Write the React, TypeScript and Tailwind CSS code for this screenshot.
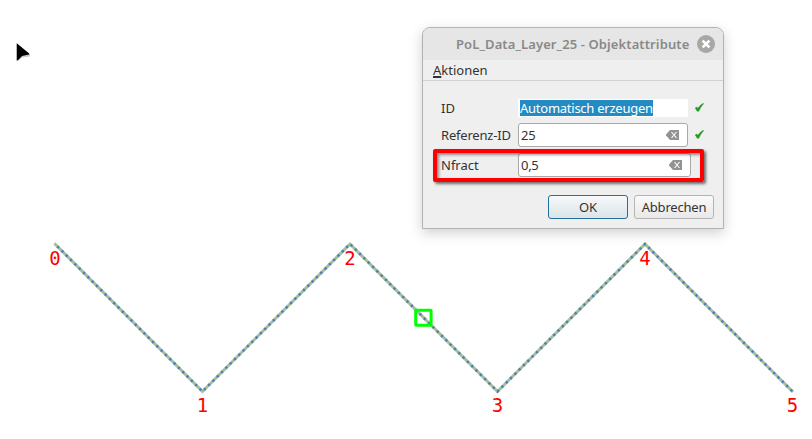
import type { ReactNode } from "react";

const POINTS = "54.5,243.500 202.5,391.5 350,244 497.5,391.5 645,244 793,392";

const VERTICES = [
  { label: "0", x: 55, y: 264.5 },
  { label: "1", x: 202.5, y: 412 },
  { label: "2", x: 350, y: 264.5 },
  { label: "3", x: 497.5, y: 412 },
  { label: "4", x: 645, y: 264.5 },
  { label: "5", x: 792.5, y: 412 },
];

function MapCanvas() {
  return (
    <svg className="absolute inset-0" width="812" height="439" viewBox="0 0 812 439">
      <polyline points={POINTS} fill="none" stroke="#a6bd9a" strokeWidth="3" />
      <polyline points={POINTS} fill="none" stroke="#4a7fba" strokeWidth="2.6" strokeDasharray="2.2 3.9" strokeDashoffset="-4" />
      <rect x="415.7" y="310.2" width="15.4" height="15" rx="0.5" fill="none" stroke="#00ff00" strokeWidth="3" />
      {VERTICES.map((v) => (
        <text
          key={v.label}
          x={v.x}
          y={v.y}
          textAnchor="middle"
          fill="#ff0000"
          className="font-['DejaVu_Sans_Mono',monospace] text-[19px]"
        >
          {v.label}
        </text>
      ))}
      <path d="M16.500 43.500V61.800l5.800-4.400 7.700-1v-2z" fill="#aaa" opacity=".6" />
      <path d="M16.800 43.300L29.200 53.400v1.200l-7.200 1.400-4 4.300h-1.200z" fill="#000" />
    </svg>
  );
}

function ClearIcon() {
  return (
    <svg width="13" height="10" viewBox="0 0 13 10" className="shrink-0">
      <path d="M4 0h9v10H4L0 5.5v-1z" fill="#929292" />
      <path d="M5.5 2l5 6M10.500 2l-5 6" stroke="#fff" strokeWidth="1.100" />
    </svg>
  );
}

function Check() {
  return (
    <svg width="9" height="9" viewBox="0 0 9 9" className="ml-[7px] shrink-0 -translate-y-px">
      <path d="M0 5l1.900-1 1.100 1.300C4.300 3.200 6 1.100 8.400.2l.5.4C6.800 2.700 5.200 5.300 3.900 8.300H2C1.600 7 1 6 0 5z" fill="#219a21" stroke="#219a21" strokeWidth=".3" />
    </svg>
  );
}

function Row({ label, height, children }: { label: ReactNode; height: string; children: ReactNode }) {
  return (
    <div className={`flex items-center ${height}`}>
      <div className="w-[77px] shrink-0 whitespace-nowrap">{label}</div>
      {children}
    </div>
  );
}

function Dialog() {
  return (
    <div className="absolute left-[422px] top-[27px] flex h-[202px] w-[302px] flex-col overflow-visible rounded-t-[8px] border border-[#b2b2b2] bg-[#efefef] text-[13px] leading-[18px] text-[#333] shadow-[0_4px_13px_rgba(0,0,0,0.19)]">
      <div className="flex h-8 shrink-0 items-center rounded-t-[7px] bg-[#e6e6e6] pl-[33px]">
        <span className="w-[234px] whitespace-nowrap text-[13px] font-semibold tracking-[0.1px] text-[#898989]">PoL_Data_Layer_25 - Objektattribute</span>
        <svg width="18" height="18" viewBox="0 0 18 18" className="ml-[7px] shrink-0">
          <circle cx="9" cy="9" r="9" fill="#a7a7a7" />
          <path d="M5.600 5.600l6.800 6.800M12.400 5.600l-6.800 6.800" stroke="#fff" strokeWidth="2.700" />
        </svg>
      </div>
      <div className="h-[21px] shrink-0 border-b border-[#d2d2d2] pl-[10px] pt-[1px]">
        <span className="underline decoration-2 underline-offset-1">A</span>ktionen
      </div>
      <div className="flex flex-col gap-[6px] pl-[18px] pt-[18px]">
        <Row label="ID" height="h-[18px]">
          <div className="flex h-[18px] w-[170px] items-center bg-white pl-[2px]">
            <span className="h-4 w-[133px] whitespace-nowrap bg-[#238bc1] leading-4 tracking-[-0.25px] text-white">Automatisch erzeugen</span>
          </div>
          <Check />
        </Row>
        <Row label={<span className="tracking-[-0.2px]">Referenz-ID</span>} height="h-6">
          <div className="flex h-6 w-[170px] items-center justify-between rounded-[3px] border border-[#aaa] bg-white pl-[2px] pr-2">
            <span className="tracking-[-0.3px]">25</span>
            <ClearIcon />
          </div>
          <Check />
        </Row>
        <Row label="Nfract" height="h-6">
          <div className="flex h-6 w-[173px] items-center justify-between rounded-[3px] border border-[#aaa] bg-white pl-[2px] pr-2">
            <span className="tracking-[-0.3px]">0,5</span>
            <ClearIcon />
          </div>
        </Row>
      </div>
      <div className="mt-[18px] flex justify-end gap-[6px] pr-[9px]">
        <button className="h-6 w-20 rounded-[3px] border border-[#226f9b] bg-linear-to-b from-[#f7f9fa] to-[#dce4e8]">OK</button>
        <button className="h-6 w-20 rounded-[3px] border border-[#b4b4b4] bg-linear-to-b from-[#fafafa] to-[#e9e9e9] tracking-[-0.2px]">Abbrechen</button>
      </div>
      <div className="absolute left-[10px] top-[121px] h-[33px] w-[271px] rounded-[2px] border-4 border-[#ff0000] shadow-[2px_2px_3px_rgba(0,0,0,0.55),inset_2px_2px_3px_rgba(0,0,0,0.4)]" />
    </div>
  );
}

export default function App() {
  return (
    <main className="relative h-[439px] w-[812px] overflow-hidden bg-white font-['Noto_Sans','Open_Sans',sans-serif]">
      <MapCanvas />
      <Dialog />
    </main>
  );
}
